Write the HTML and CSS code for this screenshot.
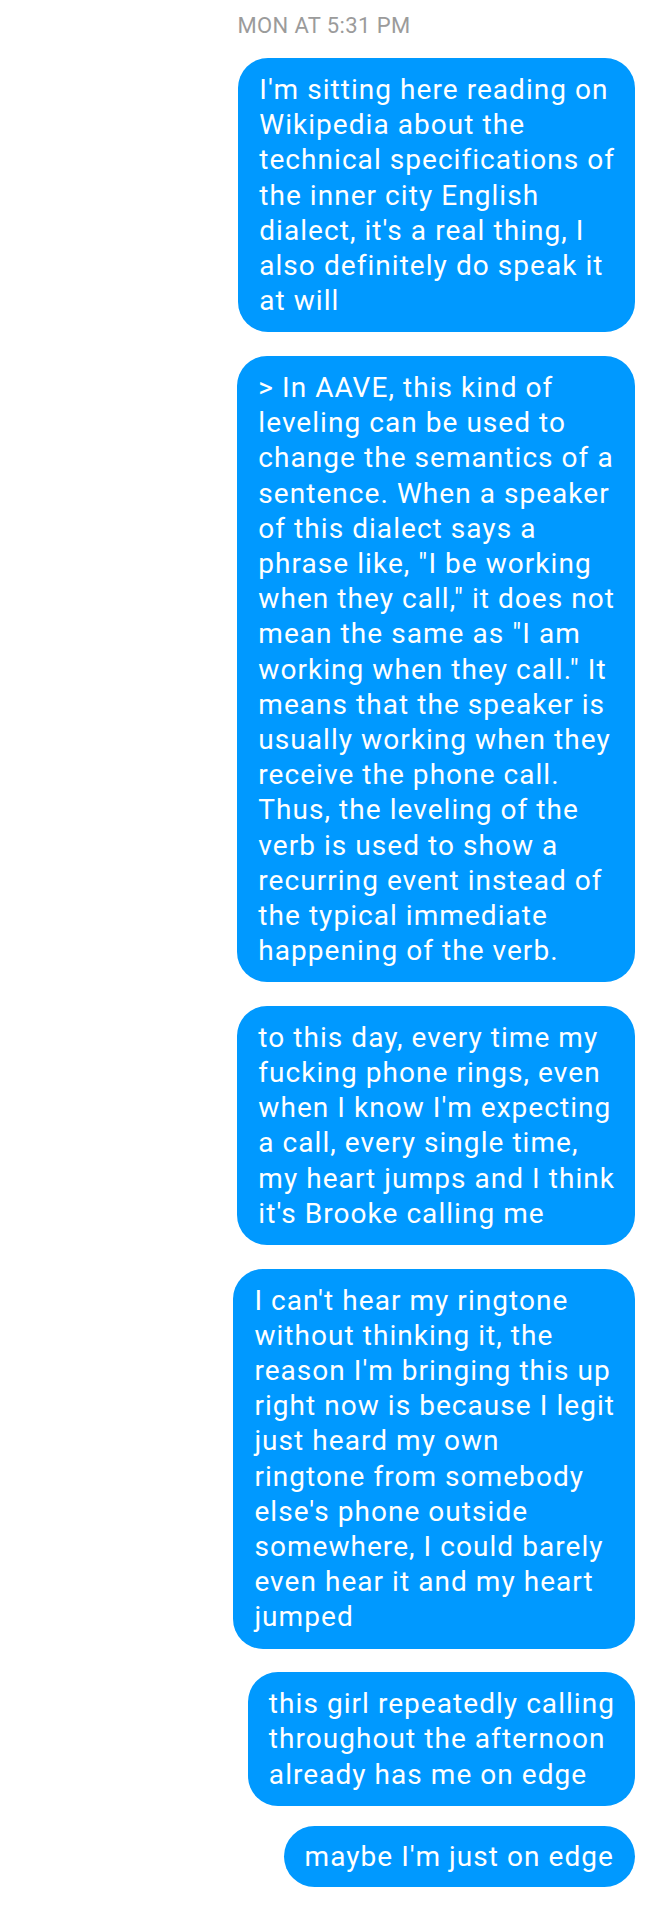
FILE: index.html
```html
<!DOCTYPE html>
<html lang="en">
<head>
<meta charset="utf-8">
<title>Messages</title>
<link rel="stylesheet" href="styles.css">
</head>
<body>
<main class="thread">
  <div class="timestamp">MON AT 5:31 PM</div>
  <div class="messages">
    <div class="bubble">I'm sitting here reading on<br>Wikipedia about the<br>technical specifications of<br>the inner city English<br>dialect, it's a real thing, I<br>also definitely do speak it<br>at will</div>
    <div class="bubble">&gt; In AAVE, this kind of<br>leveling can be used to<br>change the semantics of a<br>sentence. When a speaker<br>of this dialect says a<br>phrase like, "I be working<br>when they call," it does not<br>mean the same as "I am<br>working when they call." It<br>means that the speaker is<br>usually working when they<br>receive the phone call.<br>Thus, the leveling of the<br>verb is used to show a<br>recurring event instead of<br>the typical immediate<br>happening of the verb.</div>
    <div class="bubble">to this day, every time my<br>fucking phone rings, even<br>when I know I'm expecting<br>a call, every single time,<br>my heart jumps and I think<br>it's Brooke calling me</div>
    <div class="bubble">I can't hear my ringtone<br>without thinking it, the<br>reason I'm bringing this up<br>right now is because I legit<br>just heard my own<br>ringtone from somebody<br>else's phone outside<br>somewhere, I could barely<br>even hear it and my heart<br>jumped</div>
    <div class="bubble">this girl repeatedly calling<br>throughout the afternoon<br>already has me on edge</div>
    <div class="bubble bubble-last">maybe I'm just on edge</div>
  </div>
</main>
</body>
</html>
```

FILE: styles.css
```css
html, body {
  margin: 0;
  padding: 0;
  background: #ffffff;
}

body {
  font-family: Roboto, "Noto Sans", "Liberation Sans", sans-serif;
  width: 648px;
}

.thread {
  padding-top: 13px;
}

.timestamp {
  text-align: center;
  color: #9b9b9b;
  font-size: 22px;
  letter-spacing: 0.4px;
  line-height: 26px;
  margin-bottom: 19px;
}

.messages {
  display: flex;
  flex-direction: column;
  align-items: flex-end;
  gap: 23.5px;
  padding-right: 13px;
}

.bubble {
  background: #0099ff;
  color: #ffffff;
  font-size: 28px;
  letter-spacing: 1.05px;
  line-height: 35.2px;
  padding: 14px 20px 14px 21px;
  border-radius: 30px;
  white-space: nowrap;
}

.bubble-last {
  margin-top: -3px;
  padding: 13px 21px 13px 21px;
  border-radius: 31px;
}
```
